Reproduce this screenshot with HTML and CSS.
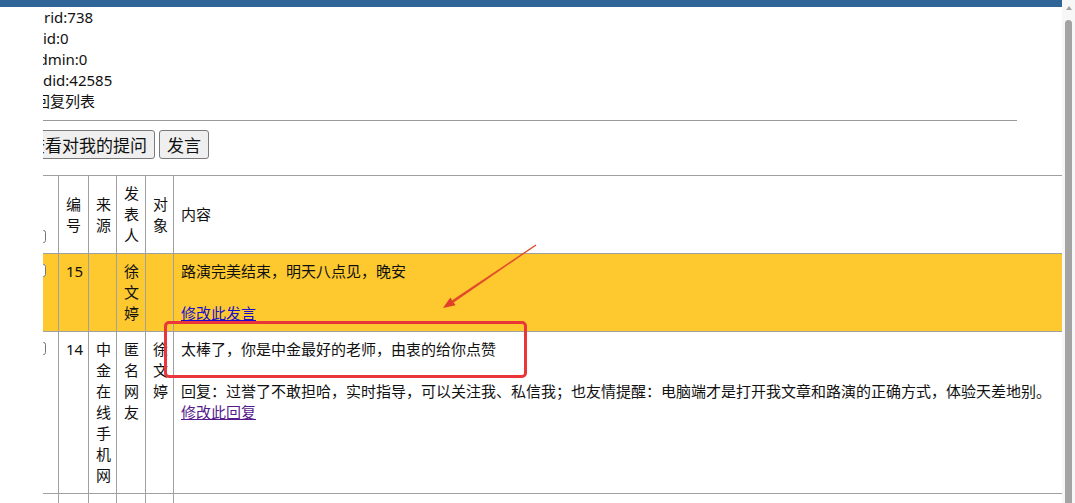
FILE: index.html
```html
<!DOCTYPE html>
<html lang="zh-CN">
<head>
<meta charset="utf-8">
<title>回复列表</title>
<link rel="stylesheet" href="styles.css">
</head>
<body>
<div class="page">
  <div class="main">
    <div class="topbar"></div>
    <div class="clip">
      <div class="info">
        <div class="line">rid:738</div>
        <div class="line">id:0</div>
        <div class="line cut4">admin:0</div>
        <div class="line">did:42585</div>
        <div class="line cut8">回复列表</div>
      </div>
      <div class="rule"></div>
      <div class="actions">
        <button class="btn btn-first">查看对我的提问</button>
        <button class="btn">发言</button>
      </div>
      <table class="list">
        <colgroup>
          <col class="c-chk"><col class="c-no"><col class="c-src"><col class="c-user"><col class="c-to"><col class="c-body">
        </colgroup>
        <thead>
          <tr>
            <th class="chk"><input type="checkbox"></th>
            <th>编号</th>
            <th>来源</th>
            <th>发表人</th>
            <th>对象</th>
            <th>内容</th>
          </tr>
        </thead>
        <tbody>
          <tr class="mine">
            <td class="chk"><input type="checkbox"></td>
            <td class="num">15</td>
            <td></td>
            <td>徐文婷</td>
            <td></td>
            <td>路演完美结束，明天八点见，晚安<br><br><a class="link" href="#">修改此发言</a></td>
          </tr>
          <tr>
            <td class="chk"><input type="checkbox"></td>
            <td class="num">14</td>
            <td>中金在线手机网</td>
            <td>匿名网友</td>
            <td>徐文婷</td>
            <td>太棒了，你是中金最好的老师，由衷的给你点赞<br><br>回复：过誉了不敢担哈，实时指导，可以关注我、私信我；也友情提醒：电脑端才是打开我文章和路演的正确方式，体验天差地别。<br><a class="link visited" href="#">修改此回复</a></td>
          </tr>
          <tr>
            <td class="chk"><input type="checkbox"></td>
            <td class="num">13</td>
            <td>中金在线</td>
            <td>匿名网友</td>
            <td>徐文婷</td>
            <td>老师您好，请问明天几点开始路演呢</td>
          </tr>
        </tbody>
      </table>
    </div>
    <div class="callout"></div>
    <svg class="arrow" width="115" height="75" viewBox="0 0 115 75" aria-hidden="true">
      <polygon points="105.6,4.6 106.4,5.4 23.7,62.4 22.1,60.2" fill="#e24a2c"/>
      <polygon points="13,68 25.6,65.2 20.3,57.4" fill="#e0402a"/>
    </svg>
  </div>
  <div class="scrollbar">
    <div class="sb-arrow"></div>
    <div class="sb-thumb"></div>
  </div>
</div>
</body>
</html>
```

FILE: styles.css
```css
html, body {
  margin: 0;
  padding: 0;
  height: 503px;
  overflow: hidden;
  background: #fff;
}

body {
  font-family: "Noto Sans", "Noto Sans CJK SC", sans-serif;
  font-size: 15px;
  line-height: 21px;
  color: #111;
}

.page {
  display: flex;
  height: 503px;
}

.main {
  position: relative;
  width: 1062px;
  height: 503px;
  overflow: hidden;
}

.topbar {
  height: 7px;
  background: #306598;
}

.clip {
  margin-left: 43px;
  width: 1019px;
  overflow: hidden;
}

.info .line {
  white-space: nowrap;
}

.info .line:first-child {
  text-indent: 1px;
}

.cut4 {
  text-indent: -13px;
}

.cut8 {
  text-indent: -8px;
}

.rule {
  width: 974px;
  margin-top: 8px;
  border-top: 1px solid #9a9a9a;
}

.actions {
  display: flex;
  gap: 4px;
  margin-top: 9px;
}

.btn {
  font-family: "Noto Sans CJK SC", sans-serif;
  font-size: 17px;
  line-height: 21px;
  height: 29px;
  padding: 3px 7px;
  color: #111;
  background: #efefef;
  border: 1px solid #7a7a7a;
  border-radius: 3px;
}

.btn-first {
  margin-left: -23px;
}

.list {
  margin-top: 16px;
  margin-left: -22px;
  width: 1060px;
  table-layout: fixed;
  border-collapse: collapse;
}

.c-chk { width: 37px; }
.c-no { width: 30px; }
.c-src { width: 28px; }
.c-user { width: 29px; }
.c-to { width: 28px; }

.list th,
.list td {
  border: 1px solid #a0a0a0;
  padding: 7px;
  text-align: left;
  font-weight: normal;
}

.list td.num {
  white-space: nowrap;
  padding-right: 0;
}

.list th {
  vertical-align: middle;
}

.list td {
  vertical-align: top;
}

.list th.chk {
  vertical-align: bottom;
}

.list input[type="checkbox"] {
  width: 13px;
  height: 13px;
  margin: 3px 3px 3px 4px;
}

.list th.chk input {
  vertical-align: bottom;
}

.mine td {
  background: #fdc92f;
}

.link {
  color: #1a0dcc;
  text-decoration: underline;
}

.link.visited {
  color: #551a8b;
}

.callout {
  position: absolute;
  left: 164px;
  top: 321px;
  width: 357px;
  height: 51px;
  border: 3px solid #ea3539;
  border-radius: 5px;
}

.arrow {
  position: absolute;
  left: 430px;
  top: 240px;
}

.scrollbar {
  width: 13px;
  height: 503px;
  background: #f7f7f7;
  display: flex;
  flex-direction: column;
  align-items: center;
}

.sb-arrow {
  margin-top: 6px;
  width: 0;
  height: 0;
  border-left: 3.5px solid transparent;
  border-right: 3.5px solid transparent;
  border-bottom: 4px solid #a3a3a3;
}

.sb-thumb {
  margin-top: 10px;
  width: 7px;
  flex: 1;
  background: #a3a3a3;
  border-radius: 4px 4px 0 0;
}
```
